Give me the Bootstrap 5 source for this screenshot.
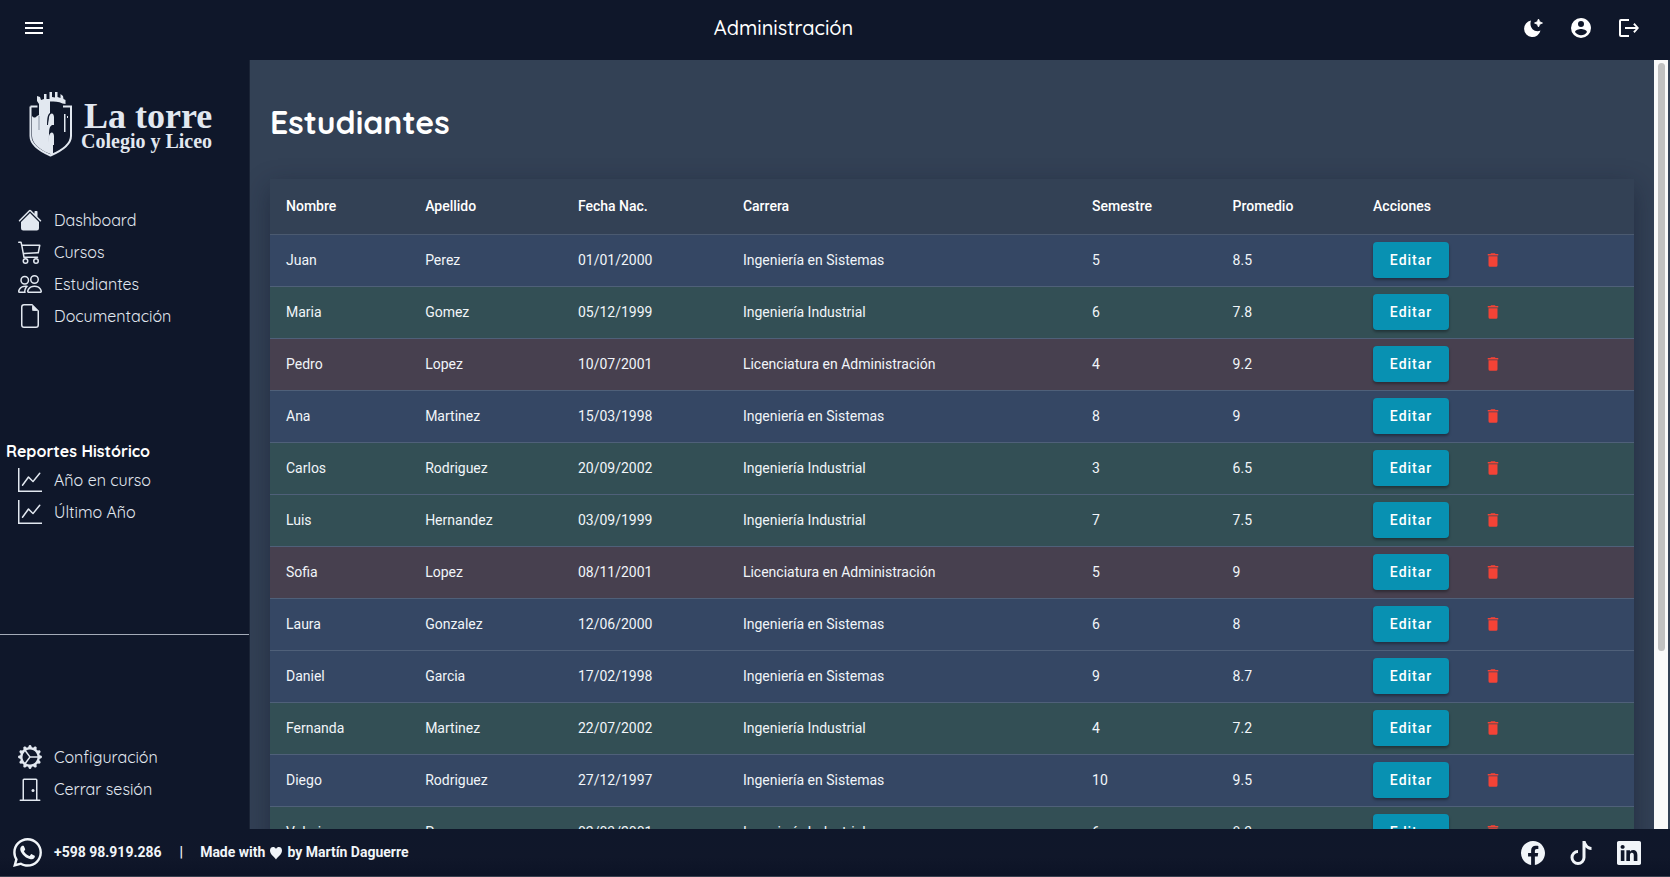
<!DOCTYPE html>
<html lang="es">
<head>
<meta charset="utf-8">
<meta name="viewport" content="width=device-width, initial-scale=1">
<title>Administración</title>
<link href="https://cdn.jsdelivr.net/npm/bootstrap@5.3.0/dist/css/bootstrap.min.css" rel="stylesheet">
<style>
:root { --ink: #0f172a; --panel: #334155; --soft: #e2e8f0; }
body { font-family: Roboto, sans-serif; font-size: 14px; background: var(--ink); color: #fff; }
.round-face { font-family: Quicksand, Lato, sans-serif; }
svg { fill: currentColor; display: block; flex: none; }
.top-bar { height: 60px; padding: 0 17px 4px 10px; }
.icon-btn { width: 48px; height: 48px; border: 0; padding: 0; background: none; color: #fff; display: grid; place-items: center; }
.top-title { font-size: 20px; line-height: 28px; font-weight: 500; }
.side { width: 250px; border-right: 1px solid #1b2436; padding: 0 0 24px; color: var(--soft); flex: none; }
.brand { height: 144px; padding: 32px 0 0 29px; }
.brand-name { font-family: "Liberation Serif", serif; font-weight: 700; font-size: 36px; line-height: 32px; padding-left: 3px; }
.brand-sub { font-family: "Liberation Serif", serif; font-weight: 700; font-size: 20px; line-height: 18px; }
.side a { height: 32px; padding-left: 18px; gap: 12px; font-size: 16px; font-weight: 400; color: var(--soft); text-decoration: none; }
.side h2 { font-size: 16px; line-height: 26px; padding-left: 6px; color: #fff; font-weight: 700; }
.side hr { color: #a4abb8; opacity: 1; }
.panel { background: var(--panel); padding: 40px 20px 0; overflow: hidden; }
.panel h1 { font-size: 32px; line-height: 44px; font-weight: 700; margin-bottom: 35px; }
.roster { table-layout: fixed; background: var(--panel); box-shadow: 0 8px 24px rgba(15,23,42,.45); white-space: nowrap; }
.roster th { height: 55px; padding: 0 16px; font-weight: 500; border-bottom: 1px solid #4b5a70; }
.roster td { height: 52px; padding: 0 16px; border-bottom: 1px solid #4f6079; color: #f1f5f9; }
.sis { background: #354764; }
.ind { background: #334f55; }
.adm { background: #47404f; }
.c1 { width: 10.2%; } .c2 { width: 11.2%; } .c3 { width: 12.1%; } .c4 { width: 25.6%; } .c5 { width: 10.3%; } .c6 { width: 10.3%; }
.btn-edit { width: 76px; height: 36px; padding: 0; border: 0; border-radius: 4px; background: #0891b2; color: #fff; font-size: 14px; font-weight: 500; letter-spacing: 1px; box-shadow: 0 2px 3px rgba(0,0,0,.35); }
.btn-edit:hover { background: #0e7490; color: #fff; }
.btn-del { width: 36px; height: 36px; margin-left: 26px; border: 0; padding: 0; background: none; color: #f44336; display: grid; place-items: center; }
.rail { width: 16px; background: #fafafa; padding: 3px 3px 3px 4px; border-right: 2px solid var(--panel); flex: none; }
.rail-thumb { height: 77%; border-radius: 4px; background: #c1c1c1; }
.foot { height: 48px; padding: 0 17px 0 13px; font-weight: 700; color: #f1f5f9; background: linear-gradient(#0f172a, #10172a 60%, #0c1326); border-bottom: 1px solid #39404f; }
.foot a { color: inherit; text-decoration: none; }
.foot-bar { margin: 0 17px 0 18px; }
.foot .social { width: 48px; display: grid; place-items: center; }
</style>
</head>
<body class="vh-100 d-flex flex-column overflow-hidden">
<header class="top-bar d-flex align-items-center flex-shrink-0">
  <button class="icon-btn" aria-label="Menú"><svg width="24" height="24" viewBox="0 0 24 24"><path d="M3 6h18v2H3zm0 5h18v2H3zm0 5h18v2H3z"/></svg></button>
  <h1 class="top-title round-face flex-grow-1 text-center mb-0">Administración</h1>
  <button class="icon-btn" aria-label="Tema"><svg width="24" height="24" viewBox="0 0 24 24"><path d="M10 4.500A8.300 8.300 0 1 0 19.500 14.500C14 17 7.500 12 10 4.500z"/><path d="M17.500 3l1.250 2.750L21.500 7l-2.750 1.250L17.500 11l-1.250-2.750L13.500 7l2.750-1.250z" stroke="currentColor" stroke-width=".8" stroke-linejoin="round"/></svg></button>
  <button class="icon-btn" aria-label="Cuenta"><svg width="24" height="24" viewBox="0 0 24 24"><path d="M12 19.200c-2.500 0-4.710-1.280-6-3.200.03-2 4-3.100 6-3.100s5.970 1.100 6 3.100a7.230 7.230 0 0 1-6 3.200M12 5a3 3 0 0 1 3 3 3 3 0 0 1-3 3 3 3 0 0 1-3-3 3 3 0 0 1 3-3m0-3A10 10 0 0 0 2 12a10 10 0 0 0 10 10 10 10 0 0 0 10-10c0-5.530-4.500-10-10-10z"/></svg></button>
  <button class="icon-btn" aria-label="Salir"><svg width="24" height="24" viewBox="0 0 24 24"><path d="M12 3v2H4v14h8v2H4a2 2 0 0 1-2-2V5a2 2 0 0 1 2-2zM17.600 7l-1.400 1.400 2.600 2.600H8v2h10.800l-2.600 2.600 1.400 1.400L22 12z"/></svg></button>
</header>

<div class="d-flex flex-grow-1 overflow-hidden">
  <aside class="side round-face d-flex flex-column justify-content-between">
    <div>
      <div class="brand d-flex">
        <svg width="44" height="65" viewBox="0 0 44 65">
          <path d="M1.500 14.500h7M34 14.500h8V44c0 8-10 15-20.500 19.500C11 59 1.500 52 1.500 44V14.500" fill="none" stroke="currentColor" stroke-width="2"/>
          <path d="M8 4l3 1 1 3 3-1V2h2.500v5h3V0h2.500v5l3 .500V0h2.500v5l3 1V2l2.500 2 .500 3 2 1v4l-3-.500c-4-2-8-2-12.500-2V21c-2 1-3 4-3 12h5c-3 2-3 4-3 18l4 1v11C12 59 3 52 3 44V24c2 2 3 2 5 0l2-1V12L8 9z"/>
          <path d="M20 25c2-6 5-3 5 0v8h-6c0-3 1-5 1-8zM20 44c2-6 5-3 5 0v9h-6zM35 22h1.500v18H35zM38 24h1v2h-1z"/>
          <path d="M10 24v14" stroke="#8993a3"/>
        </svg>
        <div class="ms-2 pt-2 text-nowrap">
          <div class="brand-name">La torre</div>
          <div class="brand-sub">Colegio y Liceo</div>
        </div>
      </div>
      <nav>
        <a href="#" class="d-flex align-items-center"><svg width="24" height="24" viewBox="0 0 16 16"><path d="M8.707 1.500a1 1 0 0 0-1.414 0L.646 8.146a.5.5 0 0 0 .708.708L8 2.207l6.646 6.647a.5.5 0 0 0 .708-.708L13 5.793V2.500a.5.5 0 0 0-.5-.5h-1a.5.5 0 0 0-.5.5v1.293z"/><path d="m8 3.293 6 6V13.500a1.500 1.500 0 0 1-1.500 1.500h-9A1.500 1.500 0 0 1 2 13.500V9.293z"/></svg>Dashboard</a>
        <a href="#" class="d-flex align-items-center"><svg width="24" height="24" viewBox="0 0 16 16"><path d="M0 1.500A.5.5 0 0 1 .5 1H2a.5.5 0 0 1 .485.379L2.890 3H14.500a.5.5 0 0 1 .49.598l-1 5a.5.5 0 0 1-.465.401l-9.397.472L4.415 11H13a.5.5 0 0 1 0 1H4a.5.5 0 0 1-.491-.408L2.010 3.607 1.610 2H.5a.5.5 0 0 1-.5-.5M3.102 4l.84 4.479 9.144-.459L13.890 4zM5 12a2 2 0 1 0 0 4 2 2 0 0 0 0-4m7 0a2 2 0 1 0 0 4 2 2 0 0 0 0-4m-7 1a1 1 0 1 1 0 2 1 1 0 0 1 0-2m7 0a1 1 0 1 1 0 2 1 1 0 0 1 0-2"/></svg>Cursos</a>
        <a href="#" class="d-flex align-items-center"><svg width="24" height="24" viewBox="0 0 16 16"><path d="M15 14s1 0 1-1-1-4-5-4-5 3-5 4 1 1 1 1zm-7.978-1L7 12.996c.001-.264.167-1.030.76-1.720C8.312 10.629 9.282 10 11 10c1.717 0 2.687.63 3.240 1.276.593.69.758 1.457.76 1.720l-.008.002-.014.002zM11 7a2 2 0 1 0 0-4 2 2 0 0 0 0 4m3-2a3 3 0 1 1-6 0 3 3 0 0 1 6 0M6.936 9.280a6 6 0 0 0-1.230-.247A7 7 0 0 0 5 9c-4 0-5 3-5 4q0 1 1 1h4.216A2.240 2.240 0 0 1 5 13c0-1.010.377-2.042 1.090-2.904.243-.294.526-.569.846-.816M4.920 10A5.500 5.500 0 0 0 4 13H1c0-.26.164-1.030.76-1.724.545-.636 1.492-1.256 3.160-1.275ZM1.500 5.500a3 3 0 1 1 6 0 3 3 0 0 1-6 0m3-2a2 2 0 1 0 0 4 2 2 0 0 0 0-4"/></svg>Estudiantes</a>
        <a href="#" class="d-flex align-items-center"><svg width="24" height="24" viewBox="0 0 16 16"><path d="M14 4.500V14a2 2 0 0 1-2 2H4a2 2 0 0 1-2-2V2a2 2 0 0 1 2-2h5.500zm-3 0A1.500 1.500 0 0 1 9.500 3V1H4a1 1 0 0 0-1 1v12a1 1 0 0 0 1 1h8a1 1 0 0 0 1-1V4.500z"/><path d="M9.500 1v3.500H13z"/></svg>Documentación</a>
      </nav>
    </div>
    <nav>
      <h2 class="mb-0">Reportes Histórico</h2>
      <a href="#" class="d-flex align-items-center"><svg width="24" height="24" viewBox="0 0 16 16"><path d="M0 0h1v15h15v1H0zm14.817 3.113a.5.5 0 0 1 .07.704l-4.500 5.500a.5.5 0 0 1-.74.037L7.060 6.767l-3.656 5.027a.5.5 0 0 1-.808-.588l4-5.500a.5.5 0 0 1 .758-.06l2.609 2.610 4.150-5.073a.5.5 0 0 1 .704-.07"/></svg>Año en curso</a>
      <a href="#" class="d-flex align-items-center"><svg width="24" height="24" viewBox="0 0 16 16"><path d="M0 0h1v15h15v1H0zm14.817 3.113a.5.5 0 0 1 .07.704l-4.500 5.500a.5.5 0 0 1-.74.037L7.060 6.767l-3.656 5.027a.5.5 0 0 1-.808-.588l4-5.500a.5.5 0 0 1 .758-.06l2.609 2.610 4.150-5.073a.5.5 0 0 1 .704-.07"/></svg>Último Año</a>
    </nav>
    <hr class="m-0">
    <nav>
      <a href="#" class="d-flex align-items-center"><svg width="24" height="24" viewBox="0 0 16 16"><path d="M7.068.727c.243-.97 1.620-.97 1.864 0l.071.286a.96.96 0 0 0 1.622.434l.205-.211c.695-.719 1.888-.03 1.613.931l-.080.284a.96.96 0 0 0 1.187 1.187l.283-.081c.960-.275 1.650.918.931 1.613l-.211.205a.96.96 0 0 0 .434 1.622l.286.071c.970.243.970 1.620 0 1.864l-.286.071a.96.96 0 0 0-.434 1.622l.211.205c.719.695.030 1.888-.931 1.613l-.284-.080a.96.96 0 0 0-1.187 1.187l.081.283c.275.960-.918 1.650-1.613.931l-.205-.211a.96.96 0 0 0-1.622.434l-.071.286c-.243.970-1.620.970-1.864 0l-.071-.286a.96.96 0 0 0-1.622-.434l-.205.211c-.695.719-1.888.030-1.613-.931l.080-.284a.96.96 0 0 0-1.186-1.187l-.284.081c-.960.275-1.650-.918-.931-1.613l.211-.205a.96.96 0 0 0-.434-1.622l-.286-.071c-.970-.243-.970-1.620 0-1.864l.286-.071a.96.96 0 0 0 .434-1.622l-.211-.205c-.719-.695-.030-1.888.931-1.613l.284.080a.96.96 0 0 0 1.187-1.186l-.081-.284c-.275-.960.918-1.650 1.613-.931l.205.211a.96.96 0 0 0 1.622-.434zM12.973 8.500H8.250l-2.834 3.779A4.998 4.998 0 0 0 12.973 8.500m0-1a4.998 4.998 0 0 0-7.557-3.779l2.834 3.780zM5.048 3.967l-.087.065zm-.431.355A4.980 4.980 0 0 0 3.002 8c0 1.455.622 2.765 1.615 3.678L7.375 8zm.344 7.646.087.065z"/></svg>Configuración</a>
      <a href="#" class="d-flex align-items-center"><svg width="24" height="24" viewBox="0 0 16 16"><path d="M3 2a1 1 0 0 1 1-1h8a1 1 0 0 1 1 1v13h1.500a.5.5 0 0 1 0 1h-13a.5.5 0 0 1 0-1H3zm1 13h8V2H4z"/><path d="M9 9a1 1 0 1 0 2 0 1 1 0 0 0-2 0"/></svg>Cerrar sesión</a>
    </nav>
  </aside>

  <main class="panel flex-grow-1">
    <h1 class="round-face">Estudiantes</h1>
    <table class="roster w-100">
      <colgroup><col class="c1"><col class="c2"><col class="c3"><col class="c4"><col class="c5"><col class="c6"><col></colgroup>
      <thead><tr><th>Nombre</th><th>Apellido</th><th>Fecha Nac.</th><th>Carrera</th><th>Semestre</th><th>Promedio</th><th>Acciones</th></tr></thead>
      <tbody id="rows"></tbody>
    </table>
  </main>
  <div class="rail" aria-hidden="true"><div class="rail-thumb"></div></div>
</div>

<footer class="foot d-flex align-items-center flex-shrink-0">
  <a href="#" class="d-flex align-items-center"><svg width="29" height="29" viewBox="2 2 20 20" class="me-2"><path d="M12.040 2c-5.460 0-9.910 4.450-9.910 9.910 0 1.750.46 3.450 1.320 4.950L2.050 22l5.250-1.380c1.450.79 3.080 1.210 4.740 1.210 5.460 0 9.910-4.450 9.910-9.910 0-2.650-1.030-5.140-2.900-7.010A9.820 9.820 0 0 0 12.040 2m.01 1.670c2.200 0 4.260.86 5.820 2.420a8.230 8.230 0 0 1 2.410 5.830c0 4.540-3.700 8.230-8.240 8.230-1.480 0-2.930-.39-4.190-1.150l-.3-.17-3.120.82.83-3.040-.2-.32a8.190 8.190 0 0 1-1.260-4.380c.01-4.540 3.700-8.240 8.250-8.240M8.530 7.330c-.16 0-.43.06-.66.31-.22.25-.87.86-.87 2.070 0 1.220.89 2.390 1 2.560.14.17 1.760 2.670 4.250 3.730.59.27 1.050.42 1.410.53.59.19 1.130.16 1.560.1.48-.07 1.460-.6 1.670-1.180s.21-1.070.15-1.180c-.07-.1-.23-.16-.48-.27-.25-.14-1.470-.74-1.690-.82-.23-.08-.37-.12-.56.12-.16.25-.64.81-.78.97-.15.17-.29.19-.53.07-.26-.13-1.060-.39-2-1.230-.74-.66-1.230-1.470-1.380-1.720-.12-.24-.01-.39.11-.5.110-.11.270-.29.370-.44.130-.14.170-.25.250-.41.080-.17.040-.31-.02-.43-.06-.11-.56-1.350-.77-1.840-.2-.48-.4-.42-.56-.43-.140 0-.300-.010-.470-.010"/></svg><span class="ms-1">+598 98.919.286</span></a>
  <span class="foot-bar">|</span>
  <span class="d-flex align-items-center gap-1">Made with <svg width="14" height="14" viewBox="0 0 14 14"><path d="M7 13.500C5.500 11 1 8.500 1 4.500 1 .500 5.500 0 7 3c1.500-3 6-2.500 6 1.500 0 4-4.500 6.500-6 9z"/></svg> by Martín Daguerre</span>
  <a href="#" class="social ms-auto" aria-label="Facebook"><svg width="24" height="24" viewBox="0 0 16 16"><path d="M16 8.049c0-4.446-3.582-8.050-8-8.050C3.580 0-.002 3.603-.002 8.050c0 4.017 2.926 7.347 6.750 7.951v-5.625h-2.030V8.050H6.750V6.275c0-2.017 1.195-3.131 3.022-3.131.876 0 1.791.157 1.791.157v1.980h-1.009c-.993 0-1.303.621-1.303 1.258v1.510h2.218l-.354 2.326H9.250V16c3.824-.604 6.750-3.934 6.750-7.951"/></svg></a>
  <a href="#" class="social" aria-label="TikTok"><svg width="24" height="24" viewBox="0 0 16 16"><path d="M9 0h1.980c.144.715.540 1.617 1.235 2.512C12.895 3.389 13.797 4 15 4v2c-1.753 0-3.070-.814-4-1.829V11a5 5 0 1 1-5-5v2a3 3 0 1 0 3 3z"/></svg></a>
  <a href="#" class="social" aria-label="LinkedIn"><svg width="24" height="24" viewBox="0 0 16 16"><path d="M0 1.146C0 .513.526 0 1.175 0h13.650C15.474 0 16 .513 16 1.146v13.708c0 .633-.526 1.146-1.175 1.146H1.175C.526 16 0 15.487 0 14.854zm4.943 12.248V6.169H2.542v7.225zm-1.200-8.212c.837 0 1.358-.554 1.358-1.248-.015-.709-.520-1.248-1.342-1.248S2.400 3.226 2.400 3.934c0 .694.521 1.248 1.327 1.248zm4.908 8.212V9.359c0-.216.016-.432.080-.586.173-.431.568-.878 1.232-.878.869 0 1.216.662 1.216 1.634v3.865h2.401V9.250c0-2.220-1.184-3.252-2.764-3.252-1.274 0-1.845.7-2.165 1.193v.025h-.016l.016-.025V6.169h-2.400c.030.678 0 7.225 0 7.225z"/></svg></a>
</footer>

<script src="https://cdn.jsdelivr.net/npm/bootstrap@5.3.0/dist/js/bootstrap.bundle.min.js"></script>
<script>
const careers = { sis: 'Ingeniería en Sistemas', ind: 'Ingeniería Industrial', adm: 'Licenciatura en Administración' };
const students = [
  ['Juan', 'Perez', '01/01/2000', 'sis', '5', '8.5'],
  ['Maria', 'Gomez', '05/12/1999', 'ind', '6', '7.8'],
  ['Pedro', 'Lopez', '10/07/2001', 'adm', '4', '9.2'],
  ['Ana', 'Martinez', '15/03/1998', 'sis', '8', '9'],
  ['Carlos', 'Rodriguez', '20/09/2002', 'ind', '3', '6.5'],
  ['Luis', 'Hernandez', '03/09/1999', 'ind', '7', '7.5'],
  ['Sofia', 'Lopez', '08/11/2001', 'adm', '5', '9'],
  ['Laura', 'Gonzalez', '12/06/2000', 'sis', '6', '8'],
  ['Daniel', 'Garcia', '17/02/1998', 'sis', '9', '8.7'],
  ['Fernanda', 'Martinez', '22/07/2002', 'ind', '4', '7.2'],
  ['Diego', 'Rodriguez', '27/12/1997', 'sis', '10', '9.5'],
  ['Valeria', 'Perez', '02/03/2001', 'ind', '6', '8.3']
];
document.getElementById('rows').innerHTML = students.map(([n, a, f, c, s, p]) => `
  <tr class="${c}"><td>${n}</td><td>${a}</td><td>${f}</td><td>${careers[c]}</td><td>${s}</td><td>${p}</td>
  <td><div class="d-flex align-items-center"><button class="btn btn-edit">Editar</button>
  <button class="btn-del" aria-label="Eliminar a ${n} ${a}"><svg width="18" height="18" viewBox="0 0 24 24"><path d="M19 4h-3.500l-1-1h-5l-1 1H5v2h14M6 19a2 2 0 0 0 2 2h8a2 2 0 0 0 2-2V7H6z"/></svg></button></div></td></tr>`).join('');
</script>
</body>
</html>
